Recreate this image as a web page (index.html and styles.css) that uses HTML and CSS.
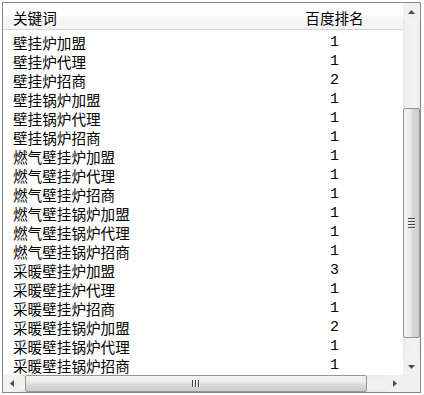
FILE: index.html
```html
<!DOCTYPE html>
<html>
<head>
<meta charset="utf-8">
<link rel="stylesheet" href="styles.css">
</head>
<body>
<div class="box">
  <div class="list">
    <div class="head">
      <div class="c1">关键词</div>
      <div class="c2">百度排名</div>
    </div>
    <div class="rows">
      <div class="row"><div class="c1">壁挂炉加盟</div><div class="c2">1</div></div>
      <div class="row"><div class="c1">壁挂炉代理</div><div class="c2">1</div></div>
      <div class="row"><div class="c1">壁挂炉招商</div><div class="c2">2</div></div>
      <div class="row"><div class="c1">壁挂锅炉加盟</div><div class="c2">1</div></div>
      <div class="row"><div class="c1">壁挂锅炉代理</div><div class="c2">1</div></div>
      <div class="row"><div class="c1">壁挂锅炉招商</div><div class="c2">1</div></div>
      <div class="row"><div class="c1">燃气壁挂炉加盟</div><div class="c2">1</div></div>
      <div class="row"><div class="c1">燃气壁挂炉代理</div><div class="c2">1</div></div>
      <div class="row"><div class="c1">燃气壁挂炉招商</div><div class="c2">1</div></div>
      <div class="row"><div class="c1">燃气壁挂锅炉加盟</div><div class="c2">1</div></div>
      <div class="row"><div class="c1">燃气壁挂锅炉代理</div><div class="c2">1</div></div>
      <div class="row"><div class="c1">燃气壁挂锅炉招商</div><div class="c2">1</div></div>
      <div class="row"><div class="c1">采暖壁挂炉加盟</div><div class="c2">3</div></div>
      <div class="row"><div class="c1">采暖壁挂炉代理</div><div class="c2">1</div></div>
      <div class="row"><div class="c1">采暖壁挂炉招商</div><div class="c2">1</div></div>
      <div class="row"><div class="c1">采暖壁挂锅炉加盟</div><div class="c2">2</div></div>
      <div class="row"><div class="c1">采暖壁挂锅炉代理</div><div class="c2">1</div></div>
      <div class="row"><div class="c1">采暖壁挂锅炉招商</div><div class="c2">1</div></div>
    </div>
  </div>
  <div class="vscroll">
    <div class="btn"><svg width="7" height="4" viewBox="0 0 7 4"><path d="M0 4 L3.5 0 L7 4 Z" fill="#4d4d4d"/></svg></div>
    <div class="vtrack top"></div>
    <div class="vthumb"><span class="grip"><i></i><i></i><i></i><i></i></span></div>
    <div class="vtrack bot"></div>
    <div class="btn"><svg width="7" height="4" viewBox="0 0 7 4"><path d="M0 0 L7 0 L3.5 4 Z" fill="#4d4d4d"/></svg></div>
  </div>
  <div class="hscroll">
    <div class="hbtn"><svg width="4" height="7" viewBox="0 0 4 7"><path d="M4 0 L4 7 L0 3.5 Z" fill="#4d4d4d"/></svg></div>
    <div class="htrack l"></div>
    <div class="hthumb"><span class="hgrip"><i></i><i></i><i></i></span></div>
    <div class="htrack r"></div>
    <div class="hbtn"><svg width="4" height="7" viewBox="0 0 4 7"><path d="M0 0 L4 3.5 L0 7 Z" fill="#4d4d4d"/></svg></div>
  </div>
  <div class="corner"></div>
</div>
</body>
</html>
```
FILE: styles.css
```css
html, body {
  margin: 0;
  padding: 0;
  background: #ffffff;
}
body {
  font-family: "Noto Sans CJK SC", sans-serif;
  font-size: 14.6px;
  color: #000;
}
.box {
  margin: 2px 0 0 2px;
  width: 417px;
  height: 389px;
  border: 1px solid #828790;
  display: grid;
  grid-template-columns: 400px 17px;
  grid-template-rows: 372px 17px;
  background: #fff;
}
.list {
  overflow: hidden;
  display: flex;
  flex-direction: column;
}
.head {
  flex: none;
  display: flex;
  align-items: center;
  background: linear-gradient(#ffffff 0%, #ffffff 45%, #f6f7f8 55%, #f3f4f5 100%);
  border-bottom: 1px solid #d5d5d5;
  padding-top: 2px;
  box-sizing: border-box;
  height: 27px;
}
.c1 {
  width: 263px;
  padding-left: 10px;
  box-sizing: border-box;
  white-space: nowrap;
}
.c2 {
  width: 137px;
  text-align: center;
}
.rows {
  padding-top: 3px;
}
.row {
  height: 19px;
  line-height: 19px;
  display: flex;
}
.row .c2 {
  font-family: "Liberation Mono", monospace;
  font-size: 15px;
}
.vscroll {
  display: flex;
  flex-direction: column;
  background: #f0f0f0;
}
.btn {
  height: 17px;
  flex: none;
  display: flex;
  align-items: center;
  justify-content: center;
}
.vtrack {
  background: linear-gradient(90deg, #e3e3e3 0, #f0f0f0 2px, #f3f3f3 14px, #e8e8e8 17px);
}
.vtrack.top { height: 88px; flex: none; }
.vtrack.bot { flex: 1; }
.vthumb {
  height: 230px;
  flex: none;
  box-sizing: border-box;
  border: 1px solid #959595;
  border-radius: 2px;
  background: linear-gradient(90deg, #f2f2f2 0, #ebebeb 40%, #d6d6d6 60%, #cfcfcf 100%);
  display: flex;
  align-items: center;
  justify-content: center;
}
.grip {
  display: flex;
  flex-direction: column;
  gap: 1px;
}
.grip i {
  display: block;
  width: 7px;
  height: 1px;
  background: #4a4a4a;
  border-bottom: 1px solid #eeeeee;
}
.hscroll {
  display: flex;
  background: #f0f0f0;
}
.hbtn {
  width: 17px;
  flex: none;
  display: flex;
  align-items: center;
  justify-content: center;
}
.htrack {
  background: linear-gradient(#e3e3e3 0, #f0f0f0 2px, #f3f3f3 14px, #e8e8e8 17px);
}
.htrack.l { width: 5px; flex: none; }
.htrack.r { flex: 1; }
.hthumb {
  width: 342px;
  flex: none;
  box-sizing: border-box;
  border: 1px solid #959595;
  border-radius: 2px;
  background: linear-gradient(#f2f2f2 0, #ebebeb 40%, #d6d6d6 60%, #cfcfcf 100%);
  display: flex;
  align-items: center;
  justify-content: center;
}
.hgrip {
  display: flex;
  gap: 1px;
}
.hgrip i {
  display: block;
  width: 1px;
  height: 7px;
  background: #4a4a4a;
  border-right: 1px solid #eeeeee;
}
.corner {
  background: #f0f0f0;
}
```
